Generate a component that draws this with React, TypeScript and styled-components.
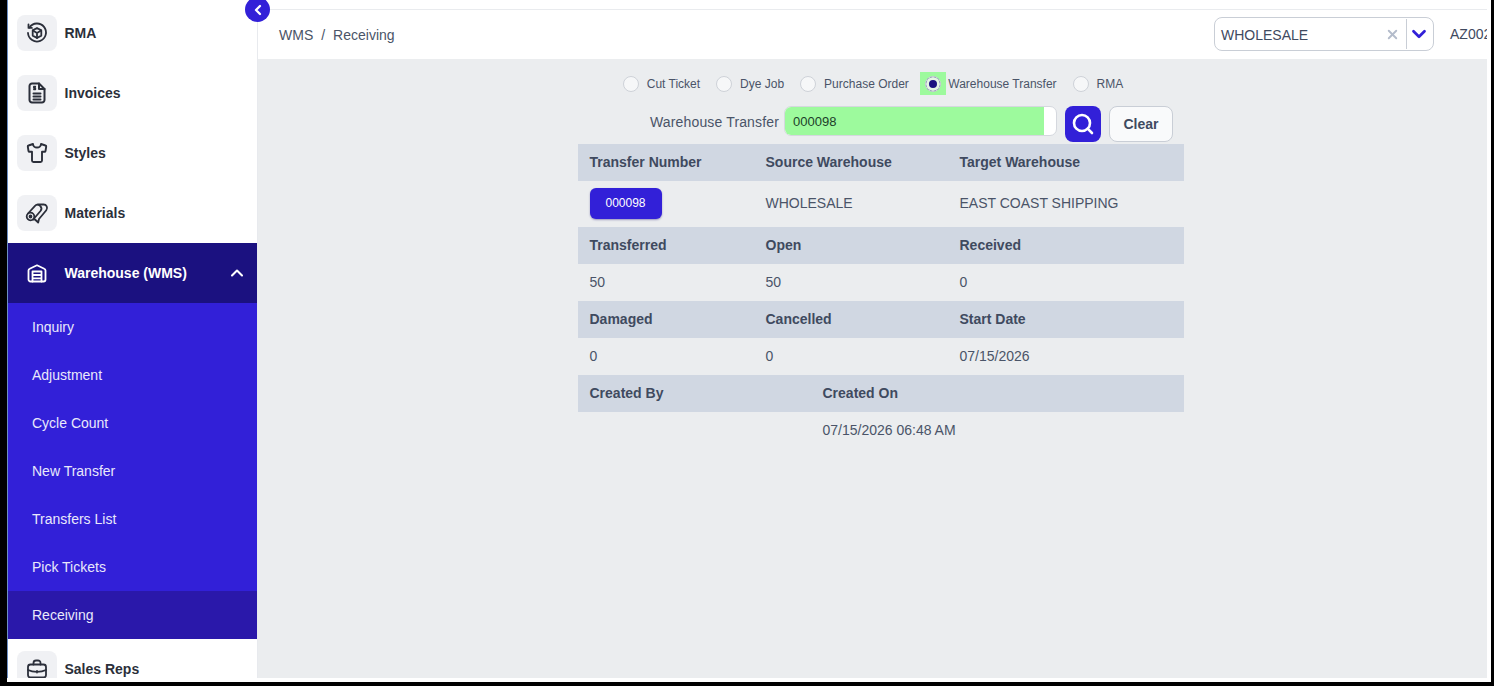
import * as React from 'react';
import styled, { createGlobalStyle } from 'styled-components';
import { ChevronLeft, ChevronDown, ChevronUp, Search, X } from 'lucide-react';

const GlobalStyle = createGlobalStyle`
  html, body {
    margin: 0;
    height: 100%;
    background: #000;
    overflow: hidden;
  }
  #root {
    height: 100%;
  }
`;

const Frame = styled.div`
  box-sizing: border-box;
  width: 1494px;
  height: 686px;
  padding: 0 3px 4px 7px;
  background: #000;
  font-family: 'Liberation Sans', Arial, sans-serif;
  color: #3f4a5f;
`;

const Shell = styled.div`
  box-sizing: border-box;
  display: flex;
  height: 100%;
  padding: 0 4px 4px 0;
  background: #fff;
  overflow: hidden;
  position: relative;
`;

const Sidebar = styled.nav`
  box-sizing: border-box;
  flex: 0 0 251px;
  padding-top: 3px;
  border-left: 1px solid #6d8fc4;
  border-right: 1px solid #e8eaee;
  display: flex;
  flex-direction: column;
  overflow: hidden;
  background: #fff;
`;

const NavItem = styled.div<{ $open?: boolean }>`
  flex: 0 0 60px;
  display: flex;
  align-items: center;
  box-sizing: border-box;
  padding-left: 9px;
  gap: 7.5px;
  font-size: 14px;
  font-weight: 700;
  color: ${(p) => (p.$open ? '#fff' : '#2b2f3a')};
  background: ${(p) => (p.$open ? '#1b1180' : '#fff')};
`;

const IconTile = styled.div<{ $open?: boolean }>`
  width: 40px;
  height: 36px;
  border-radius: 8px;
  display: flex;
  align-items: center;
  justify-content: center;
  background: ${(p) => (p.$open ? 'transparent' : '#f0f1f4')};
  color: ${(p) => (p.$open ? '#fff' : '#2b2f3a')};
`;

const OpenChevron = styled(ChevronUp)`
  margin-left: auto;
  margin-right: 10px;
`;

const SubMenu = styled.div`
  flex: 0 0 auto;
  background: #3220d8;
  display: flex;
  flex-direction: column;
`;

const SubItem = styled.div<{ $active?: boolean }>`
  height: 48px;
  display: flex;
  align-items: center;
  padding-left: 24px;
  font-size: 14px;
  color: #e9e8fb;
  background: ${(p) => (p.$active ? '#2a18aa' : 'transparent')};
`;

const CollapseButton = styled.button`
  position: absolute;
  left: 238px;
  top: -3px;
  width: 25px;
  height: 25px;
  padding: 0;
  border: 0;
  border-radius: 50%;
  background: #3220d8;
  color: #fff;
  display: flex;
  align-items: center;
  justify-content: center;
`;

const Main = styled.main`
  flex: 1;
  min-width: 0;
  display: flex;
  flex-direction: column;
  background: #ebedef;
`;

const TopBar = styled.header`
  box-sizing: border-box;
  flex: 0 0 59px;
  padding: 0 0 0 21px;
  display: flex;
  align-items: center;
  justify-content: space-between;
  background: #fff;
  box-shadow: inset 0 9px 0 #fff, inset 0 10px 0 #e9ebee;
  overflow: hidden;
`;

const Crumbs = styled.div`
  display: flex;
  gap: 8px;
  font-size: 14px;
  margin-top: 10px;
  color: #4a5468;
`;

const TopRight = styled.div`
  display: flex;
  align-items: center;
  gap: 16px;
  margin-top: 9px;
  white-space: nowrap;
  font-size: 14px;
  width: 273px;
  overflow: hidden;
  flex-shrink: 0;
`;

const WarehouseSelect = styled.div`
  box-sizing: border-box;
  flex: 0 0 220px;
  height: 34px;
  border: 1px solid #c9ced6;
  border-radius: 8px;
  display: flex;
  align-items: center;
  padding: 0 3px 0 6px;
  font-size: 14px;
  color: #3f4a5f;
`;

const SelectValue = styled.span`
  flex: 1;
  padding-top: 1px;
`;

const SelectDivider = styled.span`
  width: 1px;
  height: 30px;
  margin: 0 1px 0 6px;
  background: #c9ced6;
`;

const Content = styled.div`
  flex: 1;
  display: flex;
  flex-direction: column;
  align-items: center;
  padding-top: 13px;
`;

const RadioRow = styled.div`
  display: flex;
  align-items: center;
  gap: 16px;
  height: 23px;
  padding-left: 1px;
  font-size: 12px;
  color: #4a5468;
`;

const RadioOption = styled.label`
  display: flex;
  align-items: center;
`;

const RadioText = styled.span`
  padding-top: 1px;
`;

const RadioBox = styled.span<{ $checked?: boolean }>`
  width: ${(p) => (p.$checked ? '26px' : '16px')};
  height: 23px;
  margin-left: ${(p) => (p.$checked ? '-5px' : '0')};
  margin-right: ${(p) => (p.$checked ? '2.5px' : '8px')};
  display: flex;
  align-items: center;
  justify-content: center;
  background: ${(p) => (p.$checked ? '#9dfa9d' : 'transparent')};
`;

const RadioCircle = styled.span<{ $checked?: boolean }>`
  box-sizing: border-box;
  flex: 0 0 16px;
  height: 16px;
  border-radius: 50%;
  border: 1px solid #ced2d8;
  background: ${(p) => (p.$checked ? '#1b1180' : '#f6f7f8')};
  box-shadow: ${(p) => (p.$checked ? 'inset 0 0 0 3px #e4f5e4' : 'none')};
`;

const SearchRow = styled.div`
  display: flex;
  align-items: flex-start;
  margin-top: 11px;
  height: 36px;
  font-size: 14px;
  color: #4a5468;
  margin-left: 78px;
`;

const SearchLabel = styled.span`
  line-height: 32px;
  letter-spacing: 0.15px;
  margin-right: 5px;
`;

const SearchField = styled.div`
  box-sizing: border-box;
  width: 273px;
  height: 30px;
  border: 1px solid #d5d8de;
  border-radius: 7px;
  background: #fff;
  overflow: hidden;
`;

const SearchValue = styled.div`
  box-sizing: border-box;
  width: 259px;
  height: 100%;
  padding-left: 8px;
  display: flex;
  align-items: center;
  font-size: 13px;
  color: #20402a;
  background: #9dfa9d;
`;

const SearchButton = styled.button`
  width: 36px;
  height: 36px;
  margin-left: 8px;
  padding: 0;
  border: 0;
  border-radius: 8px;
  background: #3220d8;
  color: #fff;
  display: flex;
  align-items: center;
  justify-content: center;
`;

const ClearButton = styled.button`
  box-sizing: border-box;
  width: 64px;
  height: 36px;
  margin-left: 8px;
  border: 1px solid #c9ced6;
  border-radius: 8px;
  background: #f9fafb;
  font: 700 14px 'Liberation Sans', Arial, sans-serif;
  color: #3f4a5f;
`;

const Details = styled.div`
  width: 606px;
  margin-top: 2px;
  margin-left: 16px;
  font-size: 14px;
`;

const HeadRow = styled.div<{ $wide?: boolean }>`
  box-sizing: border-box;
  display: grid;
  grid-template-columns: ${(p) => (p.$wide ? '233px 1fr' : '176px 194px 1fr')};
  height: 37px;
  align-items: center;
  padding: 0 0 2px 12px;
  background: #d0d7e2;
  font-weight: 700;
  color: #3f4a5f;
`;

const ValueRow = styled.div<{ $wide?: boolean; $tall?: boolean }>`
  box-sizing: border-box;
  display: grid;
  grid-template-columns: ${(p) => (p.$wide ? '233px 1fr' : '176px 194px 1fr')};
  height: ${(p) => (p.$tall ? '46px' : '37px')};
  align-items: center;
  padding: 0 0 2px 12px;
  color: #4a5468;
`;

const TransferButton = styled.button`
  display: block;
  width: 72px;
  height: 31px;
  padding: 0;
  border: 0;
  border-radius: 6px;
  background: #3220d8;
  color: #fff;
  font: 12px 'Liberation Sans', Arial, sans-serif;
  box-shadow: 0 1px 2px rgba(30, 20, 120, 0.4);
`;

const RmaIcon = () => (
  <svg width="24" height="24" viewBox="0 0 24 24" fill="none" stroke="currentColor" strokeWidth="1.8" strokeLinecap="round" strokeLinejoin="round">
    <path d="M4.5 6.5A9 9 0 1 1 3 12" />
    <path d="M3.5 3.5v3.4h3.4" />
    <path d="M12 7l4.3 2.4v5.2L12 17l-4.3-2.4V9.4z" />
    <path d="M7.9 9.5 12 12l4.1-2.5M12 12v5" />
  </svg>
);

const InvoiceIcon = () => (
  <svg width="24" height="24" viewBox="0 0 24 24" fill="none" stroke="currentColor" strokeWidth="2" strokeLinecap="round" strokeLinejoin="round">
    <path d="M7 2.500h7l5.500 5.500v11a2.500 2.500 0 0 1-2.500 2.500H7A2.500 2.500 0 0 1 4.500 19V5A2.500 2.500 0 0 1 7 2.500z" />
    <path d="M14 2.500V8h5.500M8.500 12.500h7M8.500 15.500h7M8.500 18.500h7" />
    <path strokeWidth="1.3" d="M10.500 5.500H8.700v1.500h1.800v1.500H8.700" />
  </svg>
);

const ShirtIcon = () => (
  <svg width="24" height="24" viewBox="0 0 24 24" fill="none" stroke="currentColor" strokeWidth="1.9" strokeLinecap="round" strokeLinejoin="round">
    <path d="M8 3 3.500 4.500a1 1 0 0 0-.7 1.100L3.500 10a1 1 0 0 0 1 .8H7V19.500a1.500 1.500 0 0 0 1.500 1.500h7a1.500 1.500 0 0 0 1.500-1.500V10.800h2.500a1 1 0 0 0 1-.8l.7-4.400a1 1 0 0 0-.7-1.100L16 3a4 3.500 0 0 1-8 0z" />
  </svg>
);

const MaterialIcon = () => (
  <svg width="24" height="24" viewBox="0 0 24 24" fill="none" stroke="currentColor" strokeWidth="1.8" strokeLinecap="round" strokeLinejoin="round">
    <circle cx="5.500" cy="15.500" r="3.800" />
    <circle cx="5.500" cy="15.500" r="1" fill="currentColor" />
    <path d="M3 12.500 10 4.800a3.800 3.800 0 0 1 5.500 5.200L8.200 18.500" />
    <path d="M13 3.500h5.500a3.500 3.500 0 0 1 2.800 5.700L14 18l-.8 3.500-3.200-3-1.800-.2" />
  </svg>
);

const WarehouseIcon = () => (
  <svg width="24" height="24" viewBox="0 0 24 24" fill="none" stroke="currentColor" strokeWidth="1.8" strokeLinecap="round" strokeLinejoin="round">
    <path d="M3.500 9.500a2 2 0 0 1 1.200-1.800L12 4.300l7.300 3.400a2 2 0 0 1 1.200 1.800V18.500a2 2 0 0 1-2 2h-13a2 2 0 0 1-2-2z" />
    <path d="M7.500 20.500V10.500h9v10M7.500 14h9M7.500 17.300h9" />
  </svg>
);

const BriefcaseIcon = () => (
  <svg width="24" height="24" viewBox="0 0 24 24" fill="none" stroke="currentColor" strokeWidth="1.8" strokeLinecap="round" strokeLinejoin="round">
    <rect x="3" y="7.500" width="18" height="13" rx="2.500" />
    <path d="M8.500 7.500V6a2.500 2.500 0 0 1 2.500-2.500h2A2.500 2.500 0 0 1 15.500 6v1.500" />
    <path d="M3 13c5 2.500 13 2.500 18 0M12 14v1.500" />
  </svg>
);

const topItems = [
  { label: 'RMA', icon: <RmaIcon /> },
  { label: 'Invoices', icon: <InvoiceIcon /> },
  { label: 'Styles', icon: <ShirtIcon /> },
  { label: 'Materials', icon: <MaterialIcon /> },
];

const subItems = ['Inquiry', 'Adjustment', 'Cycle Count', 'New Transfer', 'Transfers List', 'Pick Tickets', 'Receiving'];

const radios = ['Cut Ticket', 'Dye Job', 'Purchase Order', 'Warehouse Transfer', 'RMA'];

const App = () => {
  return (
    <Frame>
      <GlobalStyle />
      <Shell>
        <Sidebar>
          {topItems.map((item) => (
            <NavItem key={item.label}>
              <IconTile>{item.icon}</IconTile>
              {item.label}
            </NavItem>
          ))}
          <NavItem $open>
            <IconTile $open>
              <WarehouseIcon />
            </IconTile>
            Warehouse (WMS)
            <OpenChevron size={20} strokeWidth={2.5} />
          </NavItem>
          <SubMenu>
            {subItems.map((item) => (
              <SubItem key={item} $active={item === 'Receiving'}>
                {item}
              </SubItem>
            ))}
          </SubMenu>
          <NavItem>
            <IconTile>
              <BriefcaseIcon />
            </IconTile>
            Sales Reps
          </NavItem>
        </Sidebar>
        <CollapseButton>
          <ChevronLeft size={16} strokeWidth={3.5} />
        </CollapseButton>
        <Main>
          <TopBar>
            <Crumbs>
              <span>WMS</span>
              <span>/</span>
              <span>Receiving</span>
            </Crumbs>
            <TopRight>
              <WarehouseSelect>
                <SelectValue>WHOLESALE</SelectValue>
                <X size={15} strokeWidth={3} color="#b4bccb" />
                <SelectDivider />
                <ChevronDown size={22} strokeWidth={3} color="#3220d8" />
              </WarehouseSelect>
              <span>AZ002</span>
            </TopRight>
          </TopBar>
          <Content>
            <RadioRow>
              {radios.map((radio) => (
                <RadioOption key={radio}>
                  <RadioBox $checked={radio === 'Warehouse Transfer'}>
                    <RadioCircle $checked={radio === 'Warehouse Transfer'} />
                  </RadioBox>
                  <RadioText>{radio}</RadioText>
                </RadioOption>
              ))}
            </RadioRow>
            <SearchRow>
              <SearchLabel>Warehouse Transfer</SearchLabel>
              <SearchField>
                <SearchValue>000098</SearchValue>
              </SearchField>
              <SearchButton>
                <Search size={24} strokeWidth={2.6} />
              </SearchButton>
              <ClearButton>Clear</ClearButton>
            </SearchRow>
            <Details>
              <HeadRow>
                <span>Transfer Number</span>
                <span>Source Warehouse</span>
                <span>Target Warehouse</span>
              </HeadRow>
              <ValueRow $tall>
                <span>
                  <TransferButton>000098</TransferButton>
                </span>
                <span>WHOLESALE</span>
                <span>EAST COAST SHIPPING</span>
              </ValueRow>
              <HeadRow>
                <span>Transferred</span>
                <span>Open</span>
                <span>Received</span>
              </HeadRow>
              <ValueRow>
                <span>50</span>
                <span>50</span>
                <span>0</span>
              </ValueRow>
              <HeadRow>
                <span>Damaged</span>
                <span>Cancelled</span>
                <span>Start Date</span>
              </HeadRow>
              <ValueRow>
                <span>0</span>
                <span>0</span>
                <span>07/15/2026</span>
              </ValueRow>
              <HeadRow $wide>
                <span>Created By</span>
                <span>Created On</span>
              </HeadRow>
              <ValueRow $wide>
                <span />
                <span>07/15/2026 06:48 AM</span>
              </ValueRow>
            </Details>
          </Content>
        </Main>
      </Shell>
    </Frame>
  );
};

export default App;
